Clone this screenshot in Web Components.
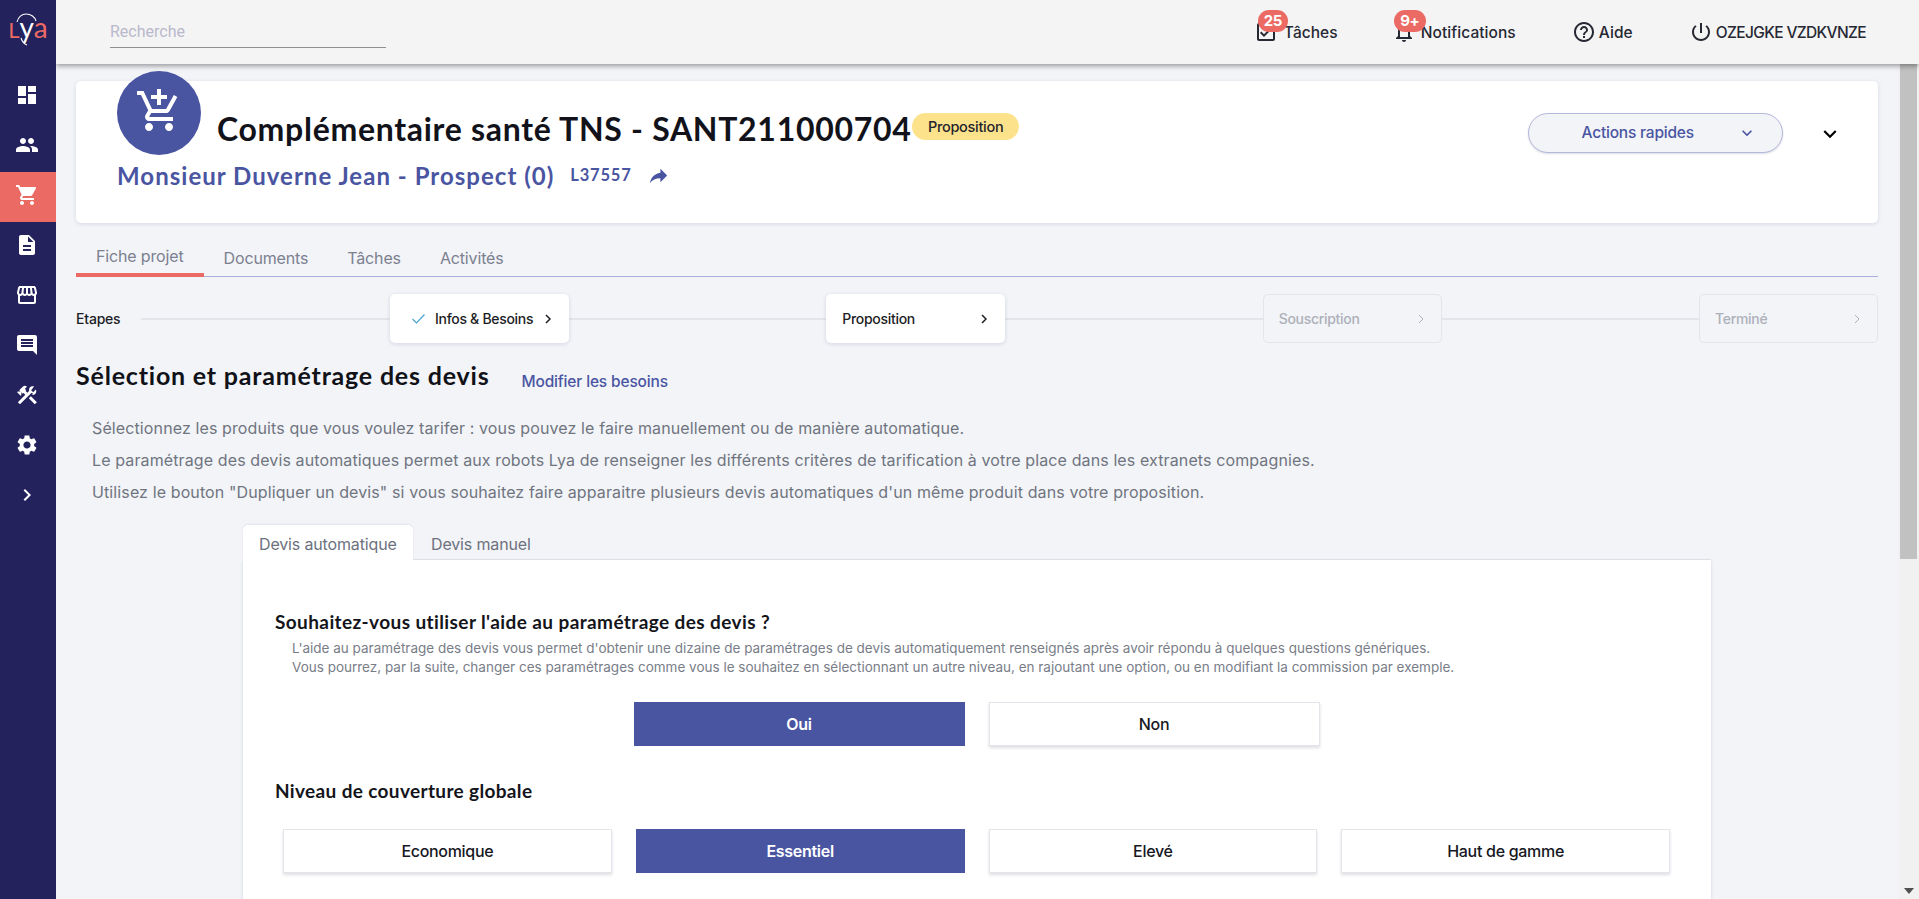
<!DOCTYPE html>
<html lang="fr">
<head>
<meta charset="utf-8">
<title>Lya</title>
<style>
  html, body { margin: 0; height: 100%; overflow: hidden; }
  body { font-family: "Inter", "Liberation Sans", sans-serif; background: #f2f4f8; }
</style>
</head>
<body>
<lya-app>
  <lya-sidebar slot="sidebar">
    <lya-nav-item icon="dashboard"></lya-nav-item>
    <lya-nav-item icon="people"></lya-nav-item>
    <lya-nav-item icon="cart" active></lya-nav-item>
    <lya-nav-item icon="description"></lya-nav-item>
    <lya-nav-item icon="store"></lya-nav-item>
    <lya-nav-item icon="comment"></lya-nav-item>
    <lya-nav-item icon="tools"></lya-nav-item>
    <lya-nav-item icon="settings"></lya-nav-item>
    <lya-nav-item icon="chevron"></lya-nav-item>
  </lya-sidebar>
  <lya-topbar slot="topbar">
    <lya-top-link icon="task" badge="25" style="width:138px">Tâches</lya-top-link>
    <lya-top-link icon="bell" badge="9+" style="width:180px">Notifications</lya-top-link>
    <lya-top-link icon="help" style="width:117px">Aide</lya-top-link>
    <lya-top-link icon="power" style="letter-spacing:-.65px">OZEJGKE VZDKVNZE</lya-top-link>
  </lya-topbar>
  <lya-project-card></lya-project-card>
  <lya-tabs>
    <lya-tab active>Fiche projet</lya-tab>
    <lya-tab>Documents</lya-tab>
    <lya-tab>Tâches</lya-tab>
    <lya-tab>Activités</lya-tab>
  </lya-tabs>
  <lya-steps>
    <lya-step state="done">Infos &amp; Besoins</lya-step>
    <lya-step state="current">Proposition</lya-step>
    <lya-step state="off">Souscription</lya-step>
    <lya-step state="off">Terminé</lya-step>
  </lya-steps>
  <lya-intro></lya-intro>
  <lya-quote-panel></lya-quote-panel>
</lya-app>

<script>
const quicksand = '"Lato", "Liberation Sans", sans-serif';
const manrope = '"Inter", "Liberation Sans", sans-serif';

const icons = {
  dashboard: 'M3 13h8V3H3v10zm0 8h8v-6H3v6zm10 0h8V11h-8v10zm0-18v6h8V3h-8z',
  people: 'M16 11c1.66 0 2.99-1.34 2.99-3S17.66 5 16 5c-1.66 0-3 1.34-3 3s1.34 3 3 3zm-8 0c1.66 0 2.99-1.34 2.99-3S9.66 5 8 5C6.34 5 5 6.34 5 8s1.34 3 3 3zm0 2c-2.33 0-7 1.17-7 3.5V19h14v-2.5c0-2.33-4.67-3.5-7-3.5zm8 0c-.29 0-.62.02-.97.05 1.16.84 1.97 1.97 1.97 3.45V19h6v-2.5c0-2.33-4.67-3.5-7-3.5z',
  cart: 'M7 18c-1.1 0-1.99.9-1.99 2S5.9 22 7 22s2-.9 2-2-.9-2-2-2zM1 2v2h2l3.6 7.59-1.35 2.45c-.16.28-.25.61-.25.96 0 1.1.9 2 2 2h12v-2H7.42c-.14 0-.25-.11-.25-.25l.03-.12.9-1.63h7.45c.75 0 1.41-.41 1.75-1.03l3.58-6.49c.08-.14.12-.31.12-.48 0-.55-.45-1-1-1H5.21l-.94-2H1zm16 16c-1.1 0-1.99.9-1.99 2s.89 2 1.99 2 2-.9 2-2-.9-2-2-2z',
  description: 'M14 2H6c-1.1 0-1.99.9-1.99 2L4 20c0 1.1.89 2 1.99 2H18c1.1 0 2-.9 2-2V8l-6-6zm2 16H8v-2h8v2zm0-4H8v-2h8v2zm-3-5V3.5L18.5 9H13z',
  store: 'M21.9 8.89l-1.05-4.37c-.22-.9-1-1.52-1.91-1.52H5.05c-.9 0-1.69.63-1.9 1.52L2.1 8.89c-.24 1.02-.02 2.06.62 2.88.08.11.19.19.28.29V19c0 1.1.9 2 2 2h14c1.1 0 2-.9 2-2v-6.94c.09-.09.2-.18.28-.28.64-.82.87-1.87.62-2.89zm-2.99-3.9l1.05 4.37c.1.42.01.84-.25 1.17-.14.18-.44.47-.94.47-.61 0-1.14-.49-1.21-1.14L16.98 5l1.93-.01zM13 5h1.96l.54 4.52c.05.39-.07.78-.33 1.07-.22.26-.54.41-.95.41-.67 0-1.22-.59-1.22-1.31V5zM8.49 9.52L9.04 5H11v4.69c0 .72-.55 1.31-1.29 1.31-.34 0-.65-.15-.89-.41-.25-.29-.37-.68-.33-1.07zm-4.45-.16L5.05 5h1.97l-.58 4.86c-.08.65-.6 1.14-1.21 1.14-.49 0-.8-.29-.93-.47-.27-.32-.36-.75-.26-1.17zM5 19v-6.03c.08.01.15.03.23.03.87 0 1.66-.36 2.24-.95.6.6 1.4.95 2.31.95.87 0 1.65-.36 2.23-.93.59.57 1.39.93 2.29.93.84 0 1.64-.35 2.24-.95.58.59 1.37.95 2.24.95.08 0 .15-.02.23-.03V19H5z',
  comment: 'M21.99 4c0-1.1-.89-2-1.99-2H4c-1.1 0-2 .9-2 2v12c0 1.1.9 2 2 2h14l4 4-.01-18zM18 14H6v-2h12v2zm0-3H6V9h12v2zm0-3H6V6h12v2z',
  tools: 'M13.78 15.3l6 6 2.11-2.16-6-6-2.11 2.16zM17.5 10.1c-.39 0-.81-.05-1.13-.18L4.98 21.29l-2.11-2.11 7.41-7.4L8.51 10l-.72.7-1.45-1.41v2.86l-.7.7-3.52-3.56.7-.7h2.81L4.22 7.17l3.53-3.53c1.17-1.17 3.07-1.17 4.24 0L9.87 5.76l1.41 1.41-.71.71 1.79 1.79 1.82-1.88c-.13-.32-.18-.74-.18-1.11 0-1.99 1.57-3.55 3.5-3.55.59 0 1.11.14 1.58.42L16.17 7.25l2 2 2.68-2.68c.28.47.42.97.42 1.58 0 1.89-1.58 3.95-3.77 3.95z',
  settings: 'M19.14 12.94c.04-.3.06-.61.06-.94 0-.32-.02-.64-.07-.94l2.03-1.58c.18-.14.23-.41.12-.61l-1.92-3.32c-.12-.22-.37-.29-.59-.22l-2.39.96c-.5-.38-1.03-.7-1.62-.94l-.36-2.54c-.04-.24-.24-.41-.48-.41h-3.84c-.24 0-.43.17-.47.41l-.36 2.54c-.59.24-1.13.57-1.62.94l-2.39-.96c-.22-.08-.47 0-.59.22L2.74 8.87c-.12.21-.08.47.12.61l2.03 1.58c-.05.3-.09.63-.09.94s.02.64.07.94l-2.03 1.58c-.18.14-.23.41-.12.61l1.92 3.32c.12.22.37.29.59.22l2.39-.96c.5.38 1.03.7 1.62.94l.36 2.54c.05.24.24.41.48.41h3.84c.24 0 .44-.17.47-.41l.36-2.54c.59-.24 1.13-.56 1.62-.94l2.39.96c.22.08.47 0 .59-.22l1.92-3.32c.12-.22.07-.47-.12-.61l-2.01-1.58zM12 15.6c-1.98 0-3.6-1.62-3.6-3.6s1.62-3.6 3.6-3.6 3.6 1.62 3.6 3.6-1.62 3.6-3.6 3.6z',
  chevron: 'M10 6L8.59 7.41 13.17 12l-4.58 4.59L10 18l6-6z',
  addcart: 'M11 9h2V6h3V4h-3V1h-2v3H8v2h3v3zm-4 9c-1.1 0-1.99.9-1.99 2S5.9 22 7 22s2-.9 2-2-.9-2-2-2zm10 0c-1.1 0-1.99.9-1.99 2s.89 2 1.99 2 2-.9 2-2-.9-2-2-2zm-9.83-3.25l.03-.12.9-1.63h7.45c.75 0 1.41-.41 1.75-1.03l3.86-7.01L19.42 4h-.01l-1.1 2-2.76 5H8.53l-.13-.27L6.16 6l-.95-2-.94-2H1v2h2l3.6 7.59-1.35 2.45c-.16.28-.25.61-.25.96 0 1.1.9 2 2 2h12v-2H7.42c-.13 0-.25-.11-.25-.25z',
  share: 'M14 9V5l7 7-7 7v-4.1c-5 0-8.5 1.6-11 5.1 1-5 4-10 11-11z',
  more: 'M16.59 8.59L12 13.17 7.41 8.59 6 10l6 6 6-6z',
  task: 'M19 5v14H5V5h14m0-2H5c-1.1 0-2 .9-2 2v14c0 1.1.9 2 2 2h14c1.1 0 2-.9 2-2V5c0-1.1-.9-2-2-2zM17.99 9l-1.41-1.42-6.59 6.59-2.58-2.57-1.42 1.41 4 3.99z',
  bell: 'M12 22c1.1 0 2-.9 2-2h-4c0 1.1.9 2 2 2zm6-6v-5c0-3.07-1.63-5.64-4.5-6.32V4c0-.83-.67-1.5-1.5-1.5s-1.5.67-1.5 1.5v.68C7.64 5.36 6 7.92 6 11v5l-2 2v1h16v-1l-2-2zm-2 1H8v-6c0-2.48 1.51-4.5 4-4.5s4 2.02 4 4.5v6z',
  help: 'M11 18h2v-2h-2v2zm1-16C6.48 2 2 6.48 2 12s4.48 10 10 10 10-4.48 10-10S17.52 2 12 2zm0 18c-4.41 0-8-3.59-8-8s3.59-8 8-8 8 3.59 8 8-3.59 8-8 8zm0-14c-2.21 0-4 1.79-4 4h2c0-1.1.9-2 2-2s2 .9 2 2c0 2-3 1.75-3 5h2c0-2.25 3-2.5 3-5 0-2.21-1.79-4-4-4z',
  power: 'M13 3h-2v10h2V3zm4.83 2.17l-1.42 1.42C17.99 7.86 19 9.81 19 12c0 3.87-3.13 7-7 7s-7-3.13-7-7c0-2.19 1.01-4.14 2.58-5.42L6.17 5.17C4.23 6.82 3 9.26 3 12c0 4.97 4.03 9 9 9s9-4.03 9-9c0-2.74-1.23-5.18-3.17-6.83z'
};

const iconSvg = (name, size) =>
  `<svg width="${size}" height="${size}" viewBox="0 0 24 24" fill="currentColor" aria-hidden="true"><path d="${icons[name]}"/></svg>`;

class LyaApp extends HTMLElement {
  constructor() {
    super();
    this.attachShadow({mode: 'open'}).innerHTML = `
      <style>
        :host { display: grid; grid-template-columns: 56px 1fr; height: 899px; overflow: hidden; }
        #right { display: flex; flex-direction: column; min-width: 0; height: 899px; }
        #body { display: flex; flex: 1; min-height: 0; }
        #content { flex: 1; min-width: 0; overflow: hidden; padding: 17px 20px 0; box-sizing: border-box; }
        #scroll { width: 21px; background: #f1f1f1; padding: 0 2px; box-sizing: border-box; display: flex; flex-direction: column; position: relative; }
        #thumb { height: 495px; background: #c1c1c1; }
        #arrow { margin-top: auto; margin-bottom: 5px; align-self: center; width: 0; height: 0; border: 5px solid transparent; border-top: 6px solid #505050; border-bottom: 0; }
        ::slotted([slot=topbar]) { position: relative; z-index: 2; }
        ::slotted([slot=sidebar]) { position: relative; z-index: 3; }
      </style>
      <slot name="sidebar"></slot>
      <div id="right">
        <slot name="topbar"></slot>
        <div id="body">
          <div id="content"><slot></slot></div>
          <div id="scroll"><div id="thumb"></div><div id="arrow"></div></div>
        </div>
      </div>`;
  }
}

class LyaSidebar extends HTMLElement {
  constructor() {
    super();
    this.attachShadow({mode: 'open'}).innerHTML = `
      <style>
        :host { display: block; background: #23225c; height: 899px; }
        #logo { height: 72px; position: relative; display: flex; justify-content: center; padding-top: 9px; box-sizing: border-box;
          font: 400 28px/36px ${quicksand}; color: #ec6a64; }
        #logo span { white-space: nowrap; }
        #logo i { font-style: normal; font-size: 22px; }
        #logo b { font-weight: 400; color: #fff; }
        #logo svg { position: absolute; left: 14px; top: 13px; }
      </style>
      <div id="logo"><span><i>L</i><b>y</b>a</span>
        <svg width="28" height="34" viewBox="0 0 28 34" fill="none" stroke="#fff" stroke-width="1.1"><path d="M3 9C4 4 8 1 12 1c5 0 9 3 10 7"/><path d="M7 25c1 3 3 6 6 7"/></svg>
      </div>
      <slot></slot>`;
  }
}

class LyaNavItem extends HTMLElement {
  constructor() {
    super();
    const active = this.hasAttribute('active');
    this.attachShadow({mode: 'open'}).innerHTML = `
      <style>
        :host { display: flex; height: 50px; align-items: center; justify-content: center; color: #fff; padding-right: 2px; box-sizing: border-box; ${active ? 'background: #ec6a64;' : ''} }
        svg { display: block; margin-bottom: 4px; }
      </style>
      ${iconSvg(this.getAttribute('icon'), 24)}`;
  }
}

class LyaTopbar extends HTMLElement {
  constructor() {
    super();
    this.attachShadow({mode: 'open'}).innerHTML = `
      <style>
        :host { display: flex; height: 64px; background: #f4f4f4; box-shadow: 0 2px 5px rgba(0,0,0,.38); align-items: center; box-sizing: border-box; padding-left: 54px; padding-right: 53px; }
        #search { width: 276px; height: 32px; margin-top: -1px; border-bottom: 1px solid #8f8f8f; font: 400 16px/34px Roboto, sans-serif; color: #b9b9cc; box-sizing: content-box; }
        #links { margin-left: auto; display: flex; align-items: center; }
      </style>
      <div id="search">Recherche</div>
      <div id="links"><slot></slot></div>`;
  }
}

class LyaTopLink extends HTMLElement {
  constructor() {
    super();
    const badge = this.getAttribute('badge');
    const icon = this.getAttribute('icon');
    const gap = icon === 'task' ? 6 : icon === 'bell' ? 5 : 3;
    this.attachShadow({mode: 'open'}).innerHTML = `
      <style>
        :host { display: flex; align-items: center; position: relative; font: 500 15.5px/24px ${manrope}; color: #262833; letter-spacing: .05px; white-space: nowrap; height: 24px; }
        svg { display: block; margin-right: ${gap}px; flex: none; }
        #t { padding-top: 2px; }
        #badge { position: absolute; left: ${icon === 'bell' ? '2px' : '4px'}; top: -10px; height: 22px; min-width: ${icon === 'bell' ? '32px' : '30px'}; background: #ec6a64; color: #fff; border-radius: 11px; font: 700 15px/22px ${manrope}; text-align: center; letter-spacing: -.3px; }
      </style>
      ${iconSvg(icon, 24)}<span id="t"><slot></slot></span>${badge ? `<span id="badge">${badge}</span>` : ''}`;
  }
}

class LyaProjectCard extends HTMLElement {
  constructor() {
    super();
    this.attachShadow({mode: 'open'}).innerHTML = `
      <style>
        :host { display: flex; height: 142px; background: #fff; border-radius: 5px; box-shadow: 0 1px 4px rgba(30,30,80,.13); padding: 0 35px 0 41px; box-sizing: border-box; }
        #left { flex: 1; min-width: 0; margin-top: -10px; }
        #row { display: flex; height: 84px; align-items: flex-start; }
        #avatar { width: 84px; height: 84px; border-radius: 50%; background: #4a55a2; color: #fff; display: flex; align-items: center; justify-content: center; flex: none; margin-right: 16px; }
        #avatar svg { margin-top: -4px; }
        h1 { margin: 38px 0 0; font: 700 32px/40px ${quicksand}; color: #12131a; white-space: nowrap; letter-spacing: .7px; }
        #status { margin: 42px 0 0 1px; height: 27px; padding: 0 15.5px; background: #fde28c; border-radius: 14px; font: 500 14.5px/27px ${manrope}; color: #23242c; letter-spacing: -.3px; }
        #sub { display: flex; align-items: center; height: 30px; margin-top: 6px; color: #4a55a2; }
        #name { font: 700 24px/30px ${quicksand}; letter-spacing: 1.02px; white-space: nowrap; }
        #ref { font: 700 16.5px/30px ${quicksand}; letter-spacing: .8px; margin: -2px 0 0 16px; }
        #sub svg { margin: -2px 0 0 15px; }
        #actions { display: flex; align-items: center; margin-top: 32px; height: 40px; }
        #quick { width: 255px; height: 40px; box-sizing: border-box; border: 1px solid #b4b8da; border-radius: 20px; background: #f2f4f8; box-shadow: 0 1px 2px rgba(30,30,80,.15); display: flex; align-items: center; color: #4a55a2; font: 500 15.5px/40px ${manrope}; letter-spacing: -.2px; padding-left: 53px; }
        #quick svg { margin-left: auto; margin-right: 25px; }
        #more { margin: 5px 0 0 34.5px; color: #000; display: block; }
      </style>
      <div id="left">
        <div id="row">
          <div id="avatar">${iconSvg('addcart', 48)}</div>
          <h1>Complémentaire santé TNS - SANT211000704</h1>
          <div id="status">Proposition</div>
        </div>
        <div id="sub">
          <span id="name">Monsieur Duverne Jean - Prospect (0)</span>
          <span id="ref">L37557</span>
          ${iconSvg('share', 23)}
        </div>
      </div>
      <div id="actions">
        <div id="quick">Actions rapides ${iconSvg('more', 20)}</div>
        <span id="more">${iconSvg('more', 26)}</span>
      </div>`;
  }
}

class LyaTabs extends HTMLElement {
  constructor() {
    super();
    this.attachShadow({mode: 'open'}).innerHTML = `
      <style>
        :host { display: flex; height: 54px; margin-bottom: 17px; border-bottom: 1px solid #a9aeda; box-sizing: border-box; align-items: flex-end; }
      </style>
      <slot></slot>`;
  }
}

class LyaTab extends HTMLElement {
  constructor() {
    super();
    const active = this.hasAttribute('active');
    this.attachShadow({mode: 'open'}).innerHTML = `
      <style>
        :host { display: block; box-sizing: border-box; height: 54px; padding: ${active ? '21px 20px 0 20px' : '23px 19px 0 20px'}; font: 400 16px/24px ${manrope}; color: #7c808f; letter-spacing: -.15px; white-space: nowrap; margin-bottom: -1px; ${active ? 'border-bottom: 4px solid #ec6a64;' : ''} }
      </style>
      <slot></slot>`;
  }
}

class LyaSteps extends HTMLElement {
  constructor() {
    super();
    this.attachShadow({mode: 'open'}).innerHTML = `
      <style>
        :host { display: grid; grid-template-columns: 314px 179px 1fr 179px 1fr 179px 1fr 179px; height: 49px; align-items: center; }
        #first { display: flex; align-items: center; grid-column: 1; }
        #label { font: 500 14px/20px ${manrope}; color: #1c1d24; letter-spacing: -.2px; width: 65px; }
        .line { height: 2px; background: #e3e5ea; flex: 1; align-self: center; }
        ::slotted(lya-step:nth-of-type(1)) { grid-column: 2; }
        ::slotted(lya-step:nth-of-type(2)) { grid-column: 4; }
        ::slotted(lya-step:nth-of-type(3)) { grid-column: 6; }
        ::slotted(lya-step:nth-of-type(4)) { grid-column: 8; }
      </style>
      <div id="first"><span id="label">Etapes</span><div class="line"></div></div>
      <div class="line" style="grid-column:3;grid-row:1"></div>
      <div class="line" style="grid-column:5;grid-row:1"></div>
      <div class="line" style="grid-column:7;grid-row:1"></div>
      <slot></slot>`;
  }
}

class LyaStep extends HTMLElement {
  constructor() {
    super();
    const state = this.getAttribute('state');
    const off = state === 'off';
    this.attachShadow({mode: 'open'}).innerHTML = `
      <style>
        :host { display: flex; grid-row: 1; height: 49px; box-sizing: border-box; align-items: center; border-radius: 5px; font: 500 14px/20px ${manrope}; letter-spacing: -.3px; white-space: nowrap;
          padding: 0 ${off ? '17px' : '18px'} 0 ${state === 'done' ? '22px' : off ? '15px' : '16px'};
          ${off ? 'border: 1px solid #e3e5ea; color: #adb0ba;' : 'background: #fff; color: #1c1d24; box-shadow: 0 1px 4px rgba(30,30,80,.14);'} }
        #check { margin-right: 10px; color: #4aa3d0; }
        svg { display: block; }
        #arrow { margin-left: auto; }
      </style>
      ${state === 'done' ? '<svg id="check" width="13" height="10" viewBox="0 0 13 10" fill="none" stroke="currentColor" stroke-width="1.2"><path d="M.5 5l4 4 8-8.5"/></svg>' : ''}
      <slot></slot>
      <svg id="arrow" width="6" height="10" viewBox="0 0 6 10" fill="none" stroke="${off ? '#adb0ba' : '#1c1d24'}" stroke-width="${off ? 1 : 1.5}"><path d="M1 1l4 4-4 4"/></svg>`;
  }
}

class LyaIntro extends HTMLElement {
  constructor() {
    super();
    this.attachShadow({mode: 'open'}).innerHTML = `
      <style>
        :host { display: block; padding-top: 18px; }
        #head { display: flex; height: 30px; }
        h2 { margin: 0; font: 700 25px/28px ${quicksand}; color: #111218; letter-spacing: .8px; white-space: nowrap; }
        a { margin: 6px 0 0 32px; font: 500 15.5px/30px ${manrope}; color: #4a55a2; letter-spacing: -.15px; white-space: nowrap; }
        #text { margin: 21px 0 0 16px; font: 400 16px/32px ${manrope}; color: #70747f; letter-spacing: .115px; white-space: nowrap; }
        p { margin: 0; }
      </style>
      <div id="head"><h2>Sélection et paramétrage des devis</h2><a>Modifier les besoins</a></div>
      <div id="text">
        <p>Sélectionnez les produits que vous voulez tarifer : vous pouvez le faire manuellement ou de manière automatique.</p>
        <p>Le paramétrage des devis automatiques permet aux robots Lya de renseigner les différents critères de tarification à votre place dans les extranets compagnies.</p>
        <p>Utilisez le bouton "Dupliquer un devis" si vous souhaitez faire apparaitre plusieurs devis automatiques d'un même produit dans votre proposition.</p>
      </div>`;
  }
}

class LyaChoice extends HTMLElement {
  constructor() {
    super();
    const on = this.hasAttribute('selected');
    this.attachShadow({mode: 'open'}).innerHTML = `
      <style>
        :host { display: flex; height: 44px; box-sizing: border-box; align-items: center; justify-content: center; font: ${on ? 600 : 500} 16px/20px ${manrope}; letter-spacing: -.3px;
          ${on ? 'background: #4a55a2; color: #fff;' : 'background: #fff; color: #17181f; border: 1px solid #e4e4ea; box-shadow: 0 2px 3px rgba(30,30,60,.14);'} }
      </style>
      <slot></slot>`;
  }
}

class LyaQuotePanel extends HTMLElement {
  constructor() {
    super();
    this.attachShadow({mode: 'open'}).innerHTML = `
      <style>
        :host { display: block; margin: 17px 0 0 167px; width: 1468px; }
        #tabs { display: flex; height: 35px; border-bottom: 1px solid #e3e5ea; box-sizing: border-box; }
        .tab { padding: 0 18px; font: 400 16px/39px ${manrope}; letter-spacing: -.15px; color: #6d717e; white-space: nowrap; }
        .tab.on { background: #fff; border-radius: 5px 5px 0 0; height: 35px; box-shadow: 0 -1px 2px rgba(30,30,80,.08); width: 170px; box-sizing: border-box; padding: 0 16px; }
        #body { background: #fff; box-shadow: 0 1px 3px rgba(30,30,80,.15); padding: 50px 32px 60px; }
        h3 { margin: 0; font: 700 19px/24px ${quicksand}; color: #14151b; letter-spacing: .4px; white-space: nowrap; }
        #desc { margin: 5px 0 0 17px; font: 400 13.5px/19px ${manrope}; color: #797d88; white-space: nowrap; }
        #desc p { margin: 0; }
        #yesno { display: flex; justify-content: center; gap: 24px; margin: 25px 0 0 8px; width: 1387px; }
        #yesno lya-choice { width: 331px; }
        h3.level { margin-top: 33px; letter-spacing: .35px; }
        #levels { display: grid; grid-template-columns: repeat(4, 1fr); gap: 24px; margin: 26px 0 0 8px; width: 1387px; }
      </style>
      <div id="tabs"><div class="tab on">Devis automatique</div><div class="tab">Devis manuel</div></div>
      <div id="body">
        <h3>Souhaitez-vous utiliser l'aide au paramétrage des devis ?</h3>
        <div id="desc">
          <p>L'aide au paramétrage des devis vous permet d'obtenir une dizaine de paramétrages de devis automatiquement renseignés après avoir répondu à quelques questions génériques.</p>
          <p>Vous pourrez, par la suite, changer ces paramétrages comme vous le souhaitez en sélectionnant un autre niveau, en rajoutant une option, ou en modifiant la commission par exemple.</p>
        </div>
        <div id="yesno"><lya-choice selected>Oui</lya-choice><lya-choice>Non</lya-choice></div>
        <h3 class="level">Niveau de couverture globale</h3>
        <div id="levels">
          <lya-choice>Economique</lya-choice>
          <lya-choice selected>Essentiel</lya-choice>
          <lya-choice>Elevé</lya-choice>
          <lya-choice>Haut de gamme</lya-choice>
        </div>
      </div>`;
  }
}

customElements.define('lya-app', LyaApp);
customElements.define('lya-sidebar', LyaSidebar);
customElements.define('lya-nav-item', LyaNavItem);
customElements.define('lya-topbar', LyaTopbar);
customElements.define('lya-top-link', LyaTopLink);
customElements.define('lya-project-card', LyaProjectCard);
customElements.define('lya-tabs', LyaTabs);
customElements.define('lya-tab', LyaTab);
customElements.define('lya-steps', LyaSteps);
customElements.define('lya-step', LyaStep);
customElements.define('lya-intro', LyaIntro);
customElements.define('lya-choice', LyaChoice);
customElements.define('lya-quote-panel', LyaQuotePanel);
</script>
</body>
</html>
